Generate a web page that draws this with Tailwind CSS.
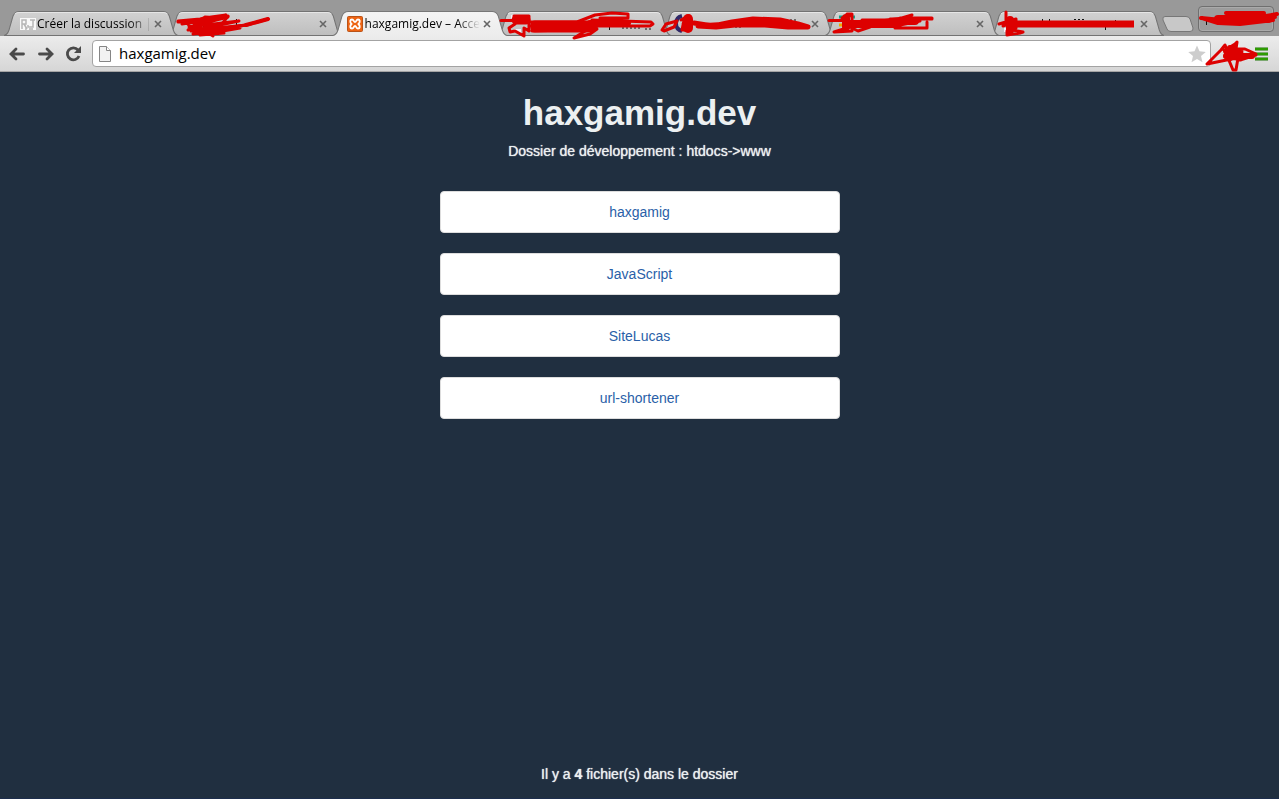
<!DOCTYPE html>
<html lang="fr">
<head>
  <meta charset="UTF-8" />
  <meta name="viewport" content="width=device-width, initial-scale=1.0"/>
  <title>haxgamig.dev - Accueil</title>
  <script src="https://cdn.jsdelivr.net/npm/@tailwindcss/browser@4"></script>
</head>

<body class="bg-[#202f40] min-h-screen flex flex-col font-['Liberation_Sans',Arial,sans-serif]">

  <!-- Shared shapes -->
  <svg class="absolute size-0">
    <symbol id="croix" viewBox="0 0 8 8">
      <path d="M1 1 7 7M7 1 1 7" fill="none" stroke="#666" stroke-width="1.6" />
    </symbol>
    <linearGradient id="gris" x1="0" y1="0" x2="0" y2="1">
      <stop offset="0" stop-color="#d2d2d2" />
      <stop offset="1" stop-color="#bebebe" />
    </linearGradient>
    <linearGradient id="clair" x1="0" y1="0" x2="0" y2="1">
      <stop offset="0" stop-color="#f4f4f4" />
      <stop offset="1" stop-color="#ececec" />
    </linearGradient>
    <symbol id="onglet" viewBox="0 0 174 25" preserveAspectRatio="none">
      <path d="M0 24.500C3 24 4 22 5 19L9 5Q11 .5 15 .5H159Q163 .5 165 5L169 19C170 22 171 24 174 24.500Z" fill="url(#gris)" stroke="#737373" />
      <path d="M11 3Q12 1.500 15 1.500H159Q162 1.500 163 3" fill="none" stroke="#e6e6e6" />
    </symbol>
    <symbol id="onglet-actif" viewBox="0 0 174 25" preserveAspectRatio="none">
      <path d="M0 25V24.500C3 24 4 22 5 19L9 5Q11 .5 15 .5H159Q163 .5 165 5L169 19C170 22 171 24 174 24.500V25Z" fill="url(#clair)" />
      <path d="M0 24.500C3 24 4 22 5 19L9 5Q11 .5 15 .5H159Q163 .5 165 5L169 19C170 22 171 24 174 24.500" fill="none" stroke="#777" />
    </symbol>
  </svg>

  <header class="relative font-['Open_Sans','Noto_Sans',sans-serif]">
    <!-- Tabs -->
    <div class="flex items-end h-9 bg-[#999] pl-1 pr-[5px]">
      <ul class="grid grid-cols-7 flex-1 h-[25px] text-xs text-black">
        <li class="relative z-10 flex items-center pl-4 pr-1.5">
          <svg class="absolute left-0 top-0 w-[calc(100%+10px)] h-full"><use href="#onglet" /></svg>
          <svg class="relative size-4 shrink-0" viewBox="0 0 16 16">
            <path d="M0 2H16V14H13V12H9V14H7L5 11V14H0Z" fill="#f8f8f8" />
            <path d="M2 13V4H6V8H2M4 8 7 13M13 4V11H8V9M10 4H15" fill="none" stroke="#b5b5b5" stroke-width="1.500" />
          </svg>
          <span class="relative ml-px whitespace-nowrap mask-r-from-80%">Créer la discussion |</span>
          <button class="relative ml-auto" aria-label="Fermer"><svg class="size-2"><use href="#croix" /></svg></button>
        </li>
        <li class="relative flex items-center justify-end pr-1.5">
          <svg class="absolute left-0 top-0 w-[calc(100%+10px)] h-full"><use href="#onglet" /></svg>
          <button class="relative" aria-label="Fermer"><svg class="size-2"><use href="#croix" /></svg></button>
        </li>
        <li class="relative z-20 flex items-center pl-3.5 pr-1.5">
          <svg class="absolute left-0 top-0 w-[calc(100%+10px)] h-full"><use href="#onglet-actif" /></svg>
          <svg class="relative size-4 shrink-0" viewBox="0 0 16 16">
            <rect x=".5" y=".5" width="15" height="15" rx="1" fill="#ee6413" stroke="#b95318" />
            <path d="M5 3.500C3 3.500 2.500 6 4.500 8 2.500 10 3 12.500 5 12.500S6.500 10 8 10 9 12.500 11 12.500 13.500 10 11.500 8C13.500 6 13 3.500 11 3.500S9.500 6 8 6 7 3.500 5 3.500Z" fill="none" stroke="#fff" stroke-width="1.800" />
          </svg>
          <span class="relative ml-0.5 whitespace-nowrap mask-r-from-80%">haxgamig.dev – Acce</span>
          <button class="relative ml-auto" aria-label="Fermer"><svg class="size-2"><use href="#croix" /></svg></button>
        </li>
        <li class="relative z-10">
          <svg class="absolute left-0 top-0 w-[calc(100%+10px)] h-full"><use href="#onglet" /></svg>
        </li>
        <li class="relative flex items-center justify-end pr-1.5">
          <svg class="absolute left-0 top-0 w-[calc(100%+10px)] h-full"><use href="#onglet" /></svg>
          <button class="relative" aria-label="Fermer"><svg class="size-2"><use href="#croix" /></svg></button>
        </li>
        <li class="relative z-10 flex items-center justify-end pr-1.5">
          <svg class="absolute left-0 top-0 w-[calc(100%+10px)] h-full"><use href="#onglet" /></svg>
          <button class="relative" aria-label="Fermer"><svg class="size-2"><use href="#croix" /></svg></button>
        </li>
        <li class="relative flex items-center justify-end pr-1.5">
          <svg class="absolute left-0 top-0 w-[calc(100%+10px)] h-full"><use href="#onglet" /></svg>
          <button class="relative" aria-label="Fermer"><svg class="size-2"><use href="#croix" /></svg></button>
        </li>
      </ul>
      <button class="ml-2 mb-1" aria-label="Nouvel onglet">
        <svg class="block w-8 h-4" viewBox="0 0 32 16">
          <path d="M3 .5H24Q27 .5 28 3L31 12Q31.500 15.500 28 15.500H9Q6 15.500 5 13L1 4Q0 .5 3 .5Z" fill="#c8c8c8" stroke="#777" />
        </svg>
      </button>
      <button class="w-19 h-[26px] ml-1 mb-1 rounded-sm border border-[#6f6f6f] bg-[#9c9c9c] shadow-[inset_0_0_0_1px_#aaa]" aria-label="Profil"></button>
    </div>

    <!-- Toolbar -->
    <div class="flex items-center h-9 pl-2 pr-2.5 bg-linear-to-b from-[#ececec] to-[#d6d6d6] border-b border-[#a5a5a5]">
      <button aria-label="Précédent">
        <svg class="block size-[18px]" viewBox="0 0 18 18" fill="none" stroke="#4a4a4a" stroke-width="2.800" stroke-linecap="round"><path d="M15.500 9H4M8 4 3 9 8 14" /></svg>
      </button>
      <button class="ml-2.5" aria-label="Suivant">
        <svg class="block size-[18px]" viewBox="0 0 18 18" fill="none" stroke="#4a4a4a" stroke-width="2.800" stroke-linecap="round"><path d="M3.500 9H15M11 4 16 9 11 14" /></svg>
      </button>
      <button class="ml-2.5" aria-label="Actualiser">
        <svg class="block size-[18px]" viewBox="0 0 18 18"><path d="M14 5A6 6 0 1 0 15 11" fill="none" stroke="#4a4a4a" stroke-width="2.800" /><path d="M17 1V8H10Z" fill="#4a4a4a" /></svg>
      </button>
      <div class="flex flex-1 items-center h-[27px] ml-2.5 pl-1.5 pr-1 rounded-sm border border-[#a3a3a3] bg-white">
        <svg class="w-3 h-4 shrink-0" viewBox="0 0 12 16"><path d="M.5 .5H7.500L11.500 4.500V15.500H.5Z" fill="#f2f2f2" stroke="#858585" /><path d="M7.500 .5V4.500H11.500" fill="#fff" stroke="#858585" /></svg>
        <input type="text" value="haxgamig.dev" aria-label="Adresse" class="flex-1 min-w-0 ml-2 text-[15px] text-black outline-none" />
        <button aria-label="Favori">
          <svg class="block size-[18px]" viewBox="0 0 18 18"><path d="M9 .5 11.500 6.300 17.800 6.900 13 11 14.500 17.300 9 14 3.500 17.300 5 11 .2 6.900 6.500 6.300Z" fill="#cdcdcd" /></svg>
        </button>
      </div>
      <button class="ml-11" aria-label="Menu">
        <svg class="block w-3.5 h-[14px]" viewBox="0 0 14 14"><path d="M0 2H13M0 7H13M0 12H13" stroke="#1d7405" stroke-width="3" /><path d="M0 2H13M0 7H13M0 12H13" stroke="#35a800" stroke-width="1.500" /></svg>
      </button>
    </div>

    <!-- Red scribbles over the private tabs -->
    <svg class="absolute z-30 left-0 top-0 w-full h-[72px] pointer-events-none" viewBox="0 0 1279 72">
      <g fill="none" stroke="#111">
        <path d="M203.500 20V28M201 22H207M236.500 19V27M609.500 23V30M1115.500 20V25M1042.500 19V25M1049.500 19V25M1105.500 25V30M1206.500 20V25" />
        <path d="M622 28H642M645 29H653M735 27H742M782 20H797M800 28H806M1022 24H1032M1074 19.500H1084M1220 23.500H1226" stroke-dasharray="2 2" />
      </g>
      <path d="M682 16C674 18 674 29 682 31" fill="none" stroke="#2f2867" stroke-width="4" />
      <path d="M839 17H844M853 17H855" stroke="#12a08a" stroke-width="3" />
      <path d="M839 25H842" stroke="#f2a800" stroke-width="3" />
      <path d="M511 17H517M514 31H521M1004 30H1009" stroke="#f4f0fa" stroke-width="4" />
      <g fill="none" stroke="#dd0000" stroke-linecap="round" stroke-linejoin="round">
        <g stroke-width="3">
          <path d="M178 21 200 19 226 15 204 18 182 24 228 17 189 27 239 21 191 31 246 25 193 34 240 28 200 35 224 33 209 22 213 36 198 27 188 30 205 17 222 18 186 22 196 33 231 27" />
          <path d="M178 22H203M228 16 216 32M222 28 247 25 268 19" />
          <path d="M246 25 268 19" stroke-width="4" />
          <path d="M501 20.500H516M514 16H529V31L524 28V36L515 31 510 32 509 28 515 24 514 16M530 22H577L595 15 612 13 628 14V18L600 18M530 26H650L653 24 651 22 592 20M532 31 597 29 590 34 574 38 590 28" />
          <path d="M662 30 666 24 677 21 674 27 664 31ZM681 20 688 16H690V30H682L684 20M683 24H691" />
          <path d="M829 20.500H843L847 14H852V31L834 32 850 27 858 31 870 27M842 18 852 15V30M862 20 895 20 912 15M890 19H932V18H900M895 28H927V22M862 25H900L920 21" />
          <path d="M1006 12V22M999 24 1016 19V28L1007 31 1007 35 1020 33 1023 32 1012 30M1003 26 1016 21M1010 19V33" />
        </g>
        <path d="M516 20H526M535 25H590M535 28H592" stroke-width="9" />
        <path d="M590 23H628" stroke-width="6" />
        <path d="M688 19V28" stroke-width="10" />
        <path d="M694 23 713 26 732 22 753 19 780 20 798 24 808 27 788 27 765 25 735 25 716 27 698 26 730 24 790 24" stroke-width="5" />
        <path d="M846 18V27M846 24H898M885 23 900 21H915" stroke-width="8" />
        <path d="M1010 20V30" stroke-width="8" />
        <path d="M1012 24H1134" stroke-width="7" stroke-linecap="butt" />
        <path d="M1201 18 1222 20 1257 14 1264 13 1226 13 1266 16 1277 14M1202 18 1218 23 1240 24 1273 20 1222 18M1242 17H1275" stroke-width="4" />
        <path d="M1218 19H1268" stroke-width="8" />
        <path d="M1207 64 1221 50 1225 45 1228 52 1237 43 1233 50 1240 52 1225 57 1256 55 1240 60 1225 56 1227 49 1235 44 1237 42 1236 49 1245 49 1256 54 1207 64M1228 58 1233 70H1236L1238 58M1224 50 1241 60M1227 54 1242 52" stroke-width="3" />
        <path d="M1226 56H1252M1226 51H1237M1230 48V58" stroke-width="6" />
      </g>
    </svg>
  </header>

  <main class="flex-1 w-[400px] max-w-full mx-auto text-center text-[#ecf0f1]">
    <h1 class="mt-[21px] text-[35px] leading-10 font-bold">haxgamig.dev</h1>
    <p class="mt-2 text-sm leading-5 text-shadow-[0_0_1px_#ecf0f1]">Dossier de développement : htdocs-&gt;www</p>
    <ul class="mt-[30px] flex flex-col gap-5 text-sm leading-5 text-[#2a5fa8]">
      <li><a href="#" class="block py-2.5 rounded border border-[#ddd] bg-white">haxgamig</a></li>
      <li><a href="#" class="block py-2.5 rounded border border-[#ddd] bg-white">JavaScript</a></li>
      <li><a href="#" class="block py-2.5 rounded border border-[#ddd] bg-white">SiteLucas</a></li>
      <li><a href="#" class="block py-2.5 rounded border border-[#ddd] bg-white">url-shortener</a></li>
    </ul>
  </main>

  <footer class="pb-3.5 border-b border-[#1c2d4c] text-center text-sm leading-5 text-[#ecf0f1] text-shadow-[0_0_1px_#ecf0f1]">
    Il y a <strong>4</strong> fichier(s) dans le dossier
  </footer>

</body>
</html>
